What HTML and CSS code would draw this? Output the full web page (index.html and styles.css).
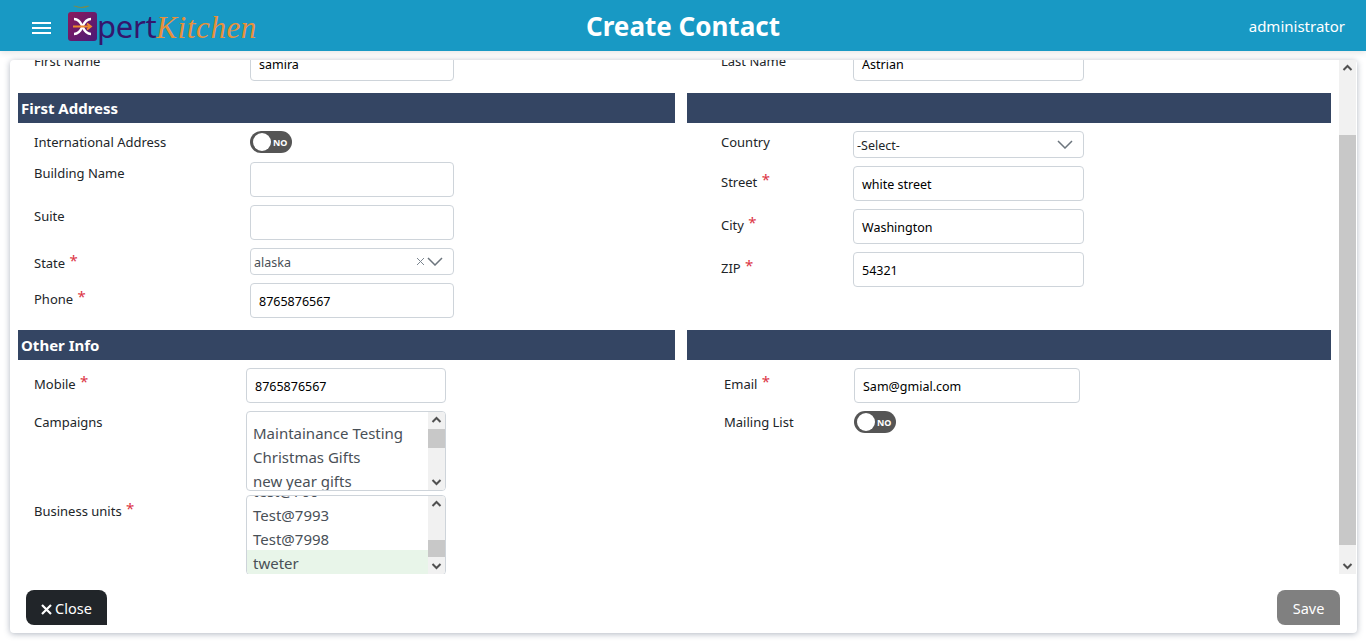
FILE: index.html
```html
<!DOCTYPE html>
<html lang="en">
<head>
    <meta charset="UTF-8">
    <title>Create Contact</title>
    <link rel="stylesheet" href="styles.css">
</head>
<body>
    <header class="top_bar">
        <div class="top_left">
            <div class="menu_btn"><span></span><span></span><span></span></div>
            <div class="logo">
                <svg class="logo_mark" width="32" height="38" viewBox="0 0 32 38">
                    <defs>
                        <linearGradient id="markFill" x1="0" y1="0" x2="1" y2="1">
                            <stop offset="0" stop-color="#8c1a5c"/>
                            <stop offset="1" stop-color="#4a1a78"/>
                        </linearGradient>
                    </defs>
                    <path d="M6 2c3-1 6 1 8 1s5-2 9-1c-3 1-5 2-8 2s-6-1-9-2z" fill="#7c8a4a"/>
                    <rect x="1" y="8" width="29" height="29" rx="3" fill="url(#markFill)"/>
                    <path d="M7 15c5 0 7 4 8.500 7.500S19 30 24 30M24 15c-5 0-7 4-8.500 7.500S12 30 7 30" fill="none" stroke="#fff" stroke-width="2.400"/>
                    <path d="M6 22.500h18M20 19.500l4 3-4 3" fill="none" stroke="#ee8a2c" stroke-width="1.800"/>
                </svg>
                <span class="logo_pert">pert</span><span class="logo_kitchen">Kitchen</span>
            </div>
        </div>
        <h1 class="page_title">Create Contact</h1>
        <div class="user_name">administrator</div>
    </header>

    <div class="card">
        <div class="card_body">
            <div class="scroll_area">
                <div class="form_top">
                    <section class="two_col">
                        <div class="col_left">
                            <div class="row">
                                <label class="lbl lbl_first">First Name</label>
                                <div class="input">samira</div>
                            </div>
                        </div>
                        <div class="col_right">
                            <div class="row">
                                <label class="lbl lbl_first">Last Name</label>
                                <div class="input">Astrian</div>
                            </div>
                        </div>
                    </section>

                    <section class="two_col bars">
                        <div class="bar">First Address</div>
                        <div class="bar"></div>
                    </section>
                    <section class="two_col">
                        <div class="col_left">
                            <div class="row row_toggle">
                                <label class="lbl">International Address</label>
                                <div class="toggle"><i></i><b>NO</b></div>
                            </div>
                            <div class="row">
                                <label class="lbl">Building Name</label>
                                <div class="input"></div>
                            </div>
                            <div class="row">
                                <label class="lbl">Suite</label>
                                <div class="input"></div>
                            </div>
                            <div class="row">
                                <label class="lbl req lbl_first">State <em>*</em></label>
                                <div class="select muted">
                                    <span>alaska</span>
                                    <svg class="clear" width="9" height="9" viewBox="0 0 9 9"><path d="M1 1l7 7M8 1L1 8" stroke="#7d8791" fill="none"/></svg>
                                    <svg class="chev" width="16" height="9" viewBox="0 0 16 9"><path d="M1 1l7 7 7-7" stroke="#6c757d" stroke-width="1.500" fill="none"/></svg>
                                </div>
                            </div>
                            <div class="row">
                                <label class="lbl req">Phone <em>*</em></label>
                                <div class="input">8765876567</div>
                            </div>
                        </div>
                        <div class="col_right">
                            <div class="row">
                                <label class="lbl">Country</label>
                                <div class="select">
                                    <span>-Select-</span>
                                    <svg class="chev" width="16" height="9" viewBox="0 0 16 9"><path d="M1 1l7 7 7-7" stroke="#6c757d" stroke-width="1.500" fill="none"/></svg>
                                </div>
                            </div>
                            <div class="row">
                                <label class="lbl req">Street <em>*</em></label>
                                <div class="input">white street</div>
                            </div>
                            <div class="row">
                                <label class="lbl req">City <em>*</em></label>
                                <div class="input">Washington</div>
                            </div>
                            <div class="row">
                                <label class="lbl req">ZIP <em>*</em></label>
                                <div class="input">54321</div>
                            </div>
                        </div>
                    </section>

                    <section class="two_col bars">
                        <div class="bar">Other Info</div>
                        <div class="bar"></div>
                    </section>
                    <section class="two_col other">
                        <div class="col_left">
                            <div class="row">
                                <label class="lbl req">Mobile <em>*</em></label>
                                <div class="input">8765876567</div>
                            </div>
                            <div class="row">
                                <label class="lbl">Campaigns</label>
                                <div class="listbox">
                                    <div class="options opts_campaign">
                                        <div class="opt">Maintainance Testing</div>
                                        <div class="opt">Christmas Gifts</div>
                                        <div class="opt">new year gifts</div>
                                    </div>
                                    <div class="mini_scroll">
                                        <svg width="17" height="17" viewBox="0 0 17 17"><path d="M4.500 10l4-4 4 4" stroke="#505050" stroke-width="2" fill="none"/></svg>
                                        <div class="mini_track"><div class="mini_thumb"></div></div>
                                        <svg width="17" height="17" viewBox="0 0 17 17"><path d="M4.500 7l4 4 4-4" stroke="#505050" stroke-width="2" fill="none"/></svg>
                                    </div>
                                </div>
                            </div>
                            <div class="row row_units">
                                <label class="lbl req">Business units <em>*</em></label>
                                <div class="listbox">
                                    <div class="options opts_units">
                                        <div class="opt">test@700</div>
                                        <div class="opt">Test@7993</div>
                                        <div class="opt">Test@7998</div>
                                        <div class="opt picked">tweter</div>
                                    </div>
                                    <div class="mini_scroll">
                                        <svg width="17" height="17" viewBox="0 0 17 17"><path d="M4.500 10l4-4 4 4" stroke="#505050" stroke-width="2" fill="none"/></svg>
                                        <div class="mini_track track_end"><div class="mini_thumb"></div></div>
                                        <svg width="17" height="17" viewBox="0 0 17 17"><path d="M4.500 7l4 4 4-4" stroke="#505050" stroke-width="2" fill="none"/></svg>
                                    </div>
                                </div>
                            </div>
                        </div>
                        <div class="col_right">
                            <div class="row">
                                <label class="lbl req">Email <em>*</em></label>
                                <div class="input">Sam@gmial.com</div>
                            </div>
                            <div class="row">
                                <label class="lbl">Mailing List</label>
                                <div class="toggle"><i></i><b>NO</b></div>
                            </div>
                        </div>
                    </section>
                </div>
            </div>
            <div class="page_scroll">
                <svg width="17" height="17" viewBox="0 0 17 17"><path d="M4.500 10l4-4 4 4" stroke="#505050" stroke-width="2" fill="none"/></svg>
                <div class="page_track"><div class="page_thumb"></div></div>
                <svg width="17" height="17" viewBox="0 0 17 17"><path d="M4.500 7l4 4 4-4" stroke="#505050" stroke-width="2" fill="none"/></svg>
            </div>
        </div>
        <div class="card_foot">
            <div class="btn btn_close"><svg class="btn_x" width="11" height="11" viewBox="0 0 11 11"><path d="M1 1l9 9M10 1l-9 9" stroke="#fff" stroke-width="2.200" fill="none"/></svg>Close</div>
            <div class="btn btn_save">Save</div>
        </div>
    </div>
</body>
</html>
```

FILE: styles.css
```css
*{
    margin:0;
    padding:0;
    box-sizing:border-box;
}
body{
    height:643px;
    overflow:hidden;
    background-color:#fff;
    font-family:"Noto Sans","Open Sans",sans-serif;
    font-size:13px;
    color:#212529;
}
.top_bar{
    height:51px;
    background-color:#1899c4;
    box-shadow:0 2px 6px rgba(0,0,0,0.1);
    display:grid;
    grid-template-columns:1fr auto 1fr;
    align-items:center;
    padding:0 21px;
    color:white;
}
.top_left{
    display:flex;
    align-items:center;
    padding-left:11px;
}
.menu_btn{
    width:19px;
    display:flex;
    flex-direction:column;
    gap:3px;
    margin-top:5px;
}
.menu_btn span{
    display:block;
    height:2px;
    background-color:white;
}
.logo{
    display:flex;
    align-items:baseline;
    margin-left:16px;
    margin-top:3px;
    height:46px;
}
.logo_mark{
    align-self:flex-start;
    margin-right:-2px;
}
.logo_pert{
    font-size:31px;
    line-height:44px;
    color:#34166c;
    letter-spacing:-0.3px;
}
.logo_kitchen{
    font-family:"Liberation Serif",serif;
    font-style:italic;
    font-size:31px;
    line-height:44px;
    letter-spacing:0.6px;
    color:#e8913a;
}
.page_title{
    font-size:26px;
    font-weight:700;
}
.user_name{
    text-align:right;
    font-size:15px;
}
.card{
    position:absolute;
    left:10px;
    top:60px;
    width:1347px;
    height:573px;
    background-color:white;
    border-radius:4px;
    box-shadow:0 1px 6px rgba(60,75,100,0.4);
    display:flex;
    flex-direction:column;
}
.card_body{
    height:514px;
    display:flex;
    overflow:hidden;
}
.scroll_area{
    flex:1;
    overflow:hidden;
    padding:0 8px;
}
.form_top{
    margin-top:-14px;
}
.two_col{
    display:grid;
    grid-template-columns:657px 644px;
    column-gap:12px;
}
.bars{
    margin-top:12px;
    margin-bottom:8px;
}
.bar{
    height:30px;
    line-height:31px;
    background-color:#344563;
    color:white;
    font-weight:700;
    font-size:15px;
    padding-left:3px;
}
.col_left,.col_right{
    display:flex;
    flex-direction:column;
    gap:8px;
}
.row{
    display:flex;
    align-items:flex-start;
}
.row_toggle{
    height:23px;
}
.lbl{
    display:block;
    padding-left:16px;
    padding-top:2px;
    line-height:18px;
    width:232px;
    flex:none;
}
.col_right .lbl{
    padding-left:34px;
    width:166px;
}
.lbl.req{
    padding-top:7px;
}
.lbl.lbl_first{
    padding-top:6px;
}
.lbl em{
    font-style:normal;
    font-size:15px;
    line-height:10px;
    color:#dc3545;
    position:relative;
    top:-2px;
    margin-left:1px;
}
.input{
    width:204px;
    height:35px;
    border:1px solid #ced4da;
    border-radius:4px;
    padding:0 8px;
    line-height:36px;
    font-size:12.500px;
    color:#000;
    background-color:white;
}
.col_right .input{
    width:231px;
}
.select{
    width:204px;
    height:27px;
    border:1px solid #ced4da;
    border-radius:4px;
    padding:0 3px;
    display:flex;
    align-items:center;
    font-size:12.500px;
    color:#212529;
}
.col_right .select{
    width:231px;
}
.select span{
    flex:1;
    padding-top:2px;
}
.select.muted{
    color:#495057;
}
.select .clear{
    margin-right:2px;
}
.select .chev{
    margin-right:7px;
}
.toggle{
    width:42px;
    height:22px;
    border-radius:11px;
    background-color:#555;
    display:flex;
    align-items:center;
    padding-left:3px;
}
.toggle i{
    display:block;
    width:18px;
    height:18px;
    border-radius:50%;
    background-color:white;
}
.toggle b{
    color:white;
    font-size:9px;
    margin-left:2px;
}

.other .col_left .lbl{
    width:228px;
}
.other .col_left .input{
    width:200px;
}
.other .col_right .lbl{
    padding-left:37px;
    width:167px;
}
.other .col_right .input{
    width:226px;
}
.row_units{
    margin-top:-4px;
}
.listbox{
    width:200px;
    height:80px;
    border:1px solid #ced4da;
    border-radius:4px;
    display:flex;
    overflow:hidden;
}
.options{
    flex:1;
    overflow:hidden;
    font-size:15px;
    color:#495057;
}
.opts_campaign{
    padding-top:8px;
}
.opts_units .opt:first-child{
    margin-top:-18px;
}
.opt{
    height:24px;
    line-height:26px;
    padding-left:6px;
}
.opt.picked{
    background-color:#e8f5e9;
}
.mini_scroll{
    width:17px;
    flex:none;
    background-color:#f1f1f1;
    display:flex;
    flex-direction:column;
    justify-content:space-between;
}
.mini_track{
    flex:1;
}
.mini_thumb{
    height:19px;
    background-color:#c8c8c8;
}
.track_end{
    display:flex;
    align-items:flex-end;
}
.track_end .mini_thumb{
    width:100%;
    height:17px;
}
.page_scroll{
    width:17px;
    flex:none;
    margin-right:1px;
    background-color:#f1f1f1;
    display:flex;
    flex-direction:column;
}
.page_track{
    flex:1;
    padding-top:58px;
    padding-bottom:12px;
}
.page_thumb{
    height:100%;
    background-color:#c8c8c8;
}
.card_foot{
    flex:1;
    display:flex;
    justify-content:space-between;
    align-items:flex-start;
    padding:16px 17px 0 16px;
}
.btn{
    height:35px;
    line-height:37px;
    font-size:14.500px;
    color:white;
    text-align:center;
    border-radius:8px 8px 0 8px;
}
.btn_close{
    width:81px;
    background-color:#212529;
}
.btn_save{
    width:63px;
    background-color:#808080;
}
.btn_x{
    margin-right:3px;
    vertical-align:-1px;
}
```
